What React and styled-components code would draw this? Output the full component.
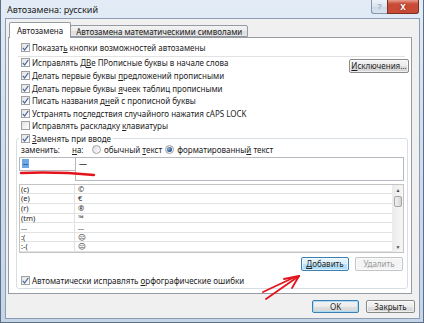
import React from 'react';
import styled, { createGlobalStyle } from 'styled-components';

const FONT = `"Noto Sans", "Liberation Sans", "DejaVu Sans", sans-serif`;

const Global = createGlobalStyle`
  html, body { margin: 0; padding: 0; background: #ffffff; }
  body { width: 424px; height: 323px; overflow: hidden; }
  * { box-sizing: border-box; }
`;

const Window = styled.div`
  position: relative;
  width: 424px;
  height: 323px;
  border: 1px solid #5d7086;
  border-top: none;
  background: linear-gradient(180deg, #e3ecf6 0%, #d2e0ef 35%, #c4d5e8 100%);
  display: flex;
  flex-direction: column;
  font-family: ${FONT};
  color: #222222;
`;

const TitleBar = styled.div`
  height: 18px;
  display: flex;
  align-items: flex-start;
  padding: 0 4px 0 6px;
`;

const TitleText = styled.div`
  flex: 1;
  font-size: 9px;
  line-height: 12px;
  margin-top: 4px;
  color: #1a1a1a;
`;

const HelpButton = styled.div`
  width: 16px;
  height: 14px;
  flex: none;
  display: flex;
  align-items: center;
  justify-content: center;
  font-family: "Liberation Sans", sans-serif;
  font-size: 8px;
  color: #7b8796;
  border: 1px solid #8796a8;
  border-top: none;
  border-right: none;
  border-radius: 0 0 0 3px;
  background: linear-gradient(180deg, #edf3f9 0%, #dbe5f0 50%, #cbd8e7 51%, #d9e4ef 100%);
`;

const CloseButton = styled.div`
  width: 32px;
  height: 14px;
  flex: none;
  display: flex;
  align-items: center;
  justify-content: center;
  font-family: "Liberation Sans", sans-serif;
  font-size: 10px;
  font-weight: 700;
  color: #ffffff;
  border: 1px solid #7a2e24;
  border-top: none;
  border-radius: 0 0 3px 0;
  background: #c94a35;
  box-shadow: inset 0 4px 3px -2px #e8a090;
  text-shadow: 0 0 2px #6a1a10;
`;

const Client = styled.div`
  flex: 1;
  margin: 0 3px 3px 4px;
  background: #f0f0f0;
  border: 1px solid #8b9db2;
  display: flex;
  flex-direction: column;
  padding: 3px 0 0 2px;
`;

const TabRow = styled.div`
  display: flex;
  align-items: flex-end;
  height: 15px;
  margin-left: 1px;
`;

const Tab = styled.div`
  position: relative;
  z-index: ${p => (p.$active ? 2 : 1)};
  height: ${p => (p.$active ? 16 : 12)}px;
  margin-bottom: ${p => (p.$active ? -1 : 0)}px;
  margin-left: ${p => (p.$active ? 0 : -1)}px;
  padding: 0 ${p => (p.$active ? 7 : 5)}px;
  display: flex;
  align-items: center;
  font-size: 8px;
  white-space: nowrap;
  border: 1px solid #959aa3;
  border-bottom: ${p => (p.$active ? 'none' : '1px solid #959aa3')};
  border-radius: 2px 2px 0 0;
  background: ${p => (p.$active ? '#ffffff' : 'linear-gradient(180deg, #f3f3f3 0%, #ebebeb 50%, #dddddd 51%, #e6e6e6 100%)')};
`;

const Panel = styled.div`
  height: 257px;
  margin-right: 7px;
  background: #ffffff;
  border: 1px solid #959aa3;
  padding: 3px 0 0 0;
  display: flex;
  flex-direction: column;
`;

const CheckRow = styled.div`
  display: flex;
  align-items: center;
  gap: 2px;
  height: 12.6px;
  padding-left: ${p => p.$indent || 0}px;
  margin-top: ${p => p.$mt || 0}px;
  font-size: 8px;
  white-space: nowrap;
`;

const Box = styled.span`
  width: 9px;
  height: 9px;
  flex: none;
  display: inline-flex;
  align-items: center;
  justify-content: center;
  border: 1px solid #a2a2a2;
  background: linear-gradient(135deg, #e2e2e2 0%, #f4f4f4 60%, #ffffff 100%);
`;

const Separator = styled.div`
  height: 1px;
  background: #e2e2e2;
  margin: 2px 6px 0 9px;
`;

const OptionsArea = styled.div`
  display: flex;
  align-items: flex-start;
`;

const OptionsColumn = styled.div`
  flex: 1;
  display: flex;
  flex-direction: column;
`;

const Button = styled.div`
  width: ${p => p.$w}px;
  height: ${p => p.$h || 14}px;
  margin-top: ${p => p.$mt || 0}px;
  margin-right: ${p => p.$mr || 0}px;
  flex: none;
  display: flex;
  align-items: center;
  justify-content: center;
  font-size: 8px;
  white-space: nowrap;
  border-radius: 2px;
  color: ${p => (p.$disabled ? '#9a9a9a' : '#1e1e1e')};
  border: 1px solid ${p => (p.$disabled ? '#c2c5c8' : p.$default ? '#3c7fb1' : '#8a8a8a')};
  background: ${p =>
    p.$disabled
      ? '#f4f4f4'
      : p.$hot
      ? 'linear-gradient(180deg, #eaf6fd 0%, #d9f0fc 50%, #bee6fd 51%, #a7d9f5 100%)'
      : 'linear-gradient(180deg, #f4f4f4 0%, #ececec 50%, #e0e0e0 51%, #d4d4d4 100%)'};
  box-shadow: ${p => (p.$default && !p.$hot ? 'inset 0 0 0 1px #a9dbf7' : 'inset 0 0 0 1px rgba(255,255,255,0.6)')};
`;

const Group = styled.fieldset`
  margin: 0 3px 0 7px;
  padding: 0 3px 2px 2px;
  border: 1px solid #d5dfe5;
  border-radius: 3px;
  min-width: 0;
`;

const Legend = styled.legend`
  padding: 0 2px 0 2px;
  margin: 0;
`;

const LabelsRow = styled.div`
  display: flex;
  align-items: center;
  height: 10px;
  font-size: 8px;
  white-space: nowrap;
`;

const FieldLabel = styled.span`
  width: ${p => p.$w}px;
  padding-left: ${p => p.$pl || 0}px;
  flex: none;
`;

const RadioOption = styled.span`
  display: inline-flex;
  align-items: center;
  gap: 3px;
  margin-right: ${p => p.$mr || 0}px;
`;

const Radio = styled.span`
  width: 9px;
  height: 9px;
  border-radius: 50%;
  border: 1px solid #a2a2a2;
  background: linear-gradient(135deg, #dcdcdc 0%, #f6f6f6 70%, #ffffff 100%);
  display: inline-flex;
  align-items: center;
  justify-content: center;
  &::after {
    content: '';
    display: ${p => (p.$on ? 'block' : 'none')};
    width: 5px;
    height: 5px;
    border-radius: 50%;
    background: radial-gradient(circle at 35% 35%, #8fb3e0 0%, #2d5a96 60%, #1d3f70 100%);
  }
`;

const InputsRow = styled.div`
  display: flex;
  align-items: flex-start;
  margin-top: 2px;
`;

const ReplaceBox = styled.div`
  width: 56px;
  height: 14px;
  border: 1px solid #b5b8be;
  border-right: none;
  padding: 1px 0 0 2px;
  font-size: 8px;
  line-height: 10px;
`;

const Selected = styled.span`
  display: inline-block;
  padding: 0 1px;
  background: #6ea6e8;
  color: #17386e;
  line-height: 9px;
`;

const WithBox = styled.div`
  flex: 1;
  height: 24px;
  border: 1px solid #b5b8be;
  padding: 1px 0 0 3px;
  font-size: 8px;
  line-height: 10px;
`;

const ListBox = styled.div`
  margin-top: 3px;
  height: 69px;
  border: 1px solid #c4c4c4;
  display: flex;
  overflow: hidden;
`;

const ListRows = styled.div`
  flex: 1;
  display: flex;
  flex-direction: column;
`;

const ListRow = styled.div`
  display: flex;
  flex: none;
  height: 9.6px;
  border-bottom: 1px solid #e2e2e2;
  font-size: 7.5px;
  line-height: 8.6px;
`;

const Cell = styled.span`
  width: ${p => (p.$first ? '55px' : 'auto')};
  flex: ${p => (p.$first ? 'none' : 1)};
  padding-left: ${p => (p.$first ? 1 : 3)}px;
  border-right: ${p => (p.$first ? '1px solid #e2e2e2' : 'none')};
`;

const ScrollBar = styled.div`
  width: 11px;
  flex: none;
  display: flex;
  flex-direction: column;
  background: linear-gradient(90deg, #ececec, #f6f6f6);
  border-left: 1px solid #ececec;
`;

const ScrollArrow = styled.div`
  height: 10px;
  display: flex;
  align-items: center;
  justify-content: center;
  font-size: 5px;
  color: #4d4d4d;
`;

const Thumb = styled.div`
  height: 11px;
  margin: 1px 1px 0 1px;
  border: 1px solid #a5a5a5;
  border-radius: 2px;
  background: linear-gradient(90deg, #f2f2f2 0%, #e4e4e4 50%, #d4d4d4 100%);
`;

const Spacer = styled.div`
  flex: 1;
`;

const ButtonsRow = styled.div`
  display: flex;
  justify-content: flex-end;
  gap: ${p => p.$gap}px;
  margin-top: ${p => p.$mt}px;
  padding-right: ${p => p.$pr}px;
`;

const Overlay = styled.svg`
  position: absolute;
  left: 0;
  top: 0;
  width: 424px;
  height: 323px;
  pointer-events: none;
`;

const Check = ({ on }) => (
  <Box>
    {on && (
      <svg width="7" height="7" viewBox="0 0 7 7">
        <polyline points="0.8,3.8 2.6,6 6.3,0.8" fill="none" stroke="#4a6a9c" strokeWidth="1.2" />
      </svg>
    )}
  </Box>
);

const Option = ({ on = true, indent = 0, mt = 0, children }) => (
  <CheckRow $indent={indent} $mt={mt}>
    <Check on={on} />
    <span>{children}</span>
  </CheckRow>
);

const entries = [
  ['(c)', '©'],
  ['(e)', '€'],
  ['(r)', '®'],
  ['(tm)', '™'],
  ['...', '…'],
  [':(', '☹'],
  [':-(', '☹'],
];

export default function App() {
  return (
    <>
      <Global />
      <Window>
        <TitleBar>
          <TitleText>Автозамена: русский</TitleText>
          <HelpButton>?</HelpButton>
          <CloseButton>x</CloseButton>
        </TitleBar>
        <Client>
          <TabRow>
            <Tab $active>Автозамена</Tab>
            <Tab>Автозамена математическими символами</Tab>
          </TabRow>
          <Panel>
            <Option indent={12}>Показат<u>ь</u> кнопки возможностей автозамены</Option>
            <Separator />
            <OptionsArea>
              <OptionsColumn>
                <Option indent={12}>Исправлять Д<u>В</u>е ПРописные буквы в начале слова</Option>
                <Option indent={12}>Делать первые буквы <u>п</u>редложений прописными</Option>
                <Option indent={12}>Делать первые буквы <u>я</u>чеек таблиц прописными</Option>
                <Option indent={12}>Писать названия д<u>н</u>ей с прописной буквы</Option>
                <Option indent={12}>Устранять по<u>с</u>ледствия случайного нажатия cAPS LOCK</Option>
                <Option indent={12} on={false}>Исправлять раскладку <u>к</u>лавиатуры</Option>
              </OptionsColumn>
              <Button $w={60} $mt={2} $mr={2}><u>И</u>сключения...</Button>
            </OptionsArea>
            <Group>
              <Legend>
                <Option><u>З</u>аменять при вводе</Option>
              </Legend>
              <LabelsRow>
                <FieldLabel $w={53} $pl={2}>заменить:</FieldLabel>
                <FieldLabel $w={20}><u>н</u>а:</FieldLabel>
                <RadioOption $mr={3}>
                  <Radio />
                  <span>обычный <u>т</u>екст</span>
                </RadioOption>
                <RadioOption>
                  <Radio $on />
                  <span>форматированны<u>й</u> текст</span>
                </RadioOption>
              </LabelsRow>
              <InputsRow>
                <ReplaceBox>
                  <Selected>--</Selected>
                </ReplaceBox>
                <WithBox>—</WithBox>
              </InputsRow>
              <ListBox>
                <ListRows>
                  {entries.map(([a, b]) => (
                    <ListRow key={a}>
                      <Cell $first>{a}</Cell>
                      <Cell>{b}</Cell>
                    </ListRow>
                  ))}
                </ListRows>
                <ScrollBar>
                  <ScrollArrow>▲</ScrollArrow>
                  <Thumb />
                  <Spacer />
                  <ScrollArrow>▼</ScrollArrow>
                </ScrollBar>
              </ListBox>
              <ButtonsRow $gap={6} $mt={4} $pr={1}>
                <Button $w={48} $default $hot><u>Д</u>обавить</Button>
                <Button $w={48} $disabled>Удалить</Button>
              </ButtonsRow>
              <Option indent={2} mt={3}>Автоматически исправлять <u>о</u>рфографические ошибки</Option>
            </Group>
          </Panel>
          <ButtonsRow $gap={7} $mt={6} $pr={4}>
            <Button $w={47} $h={13} $default>OK</Button>
            <Button $w={49} $h={13}>Закрыть</Button>
          </ButtonsRow>
        </Client>
        <Overlay viewBox="0 0 424 323">
          <path d="M20 173 Q 56 171.5 93 175" fill="none" stroke="#e3141b" strokeWidth="2.4" strokeLinecap="round" />
          <g fill="none" stroke="#e3141b" strokeWidth="1.8" strokeLinecap="round">
            <path d="M265 299 L298 276" />
            <path d="M262 292 L294 277" />
            <path d="M298 276 L283 279" />
            <path d="M298 276 L291 288" />
          </g>
        </Overlay>
      </Window>
    </>
  );
}
